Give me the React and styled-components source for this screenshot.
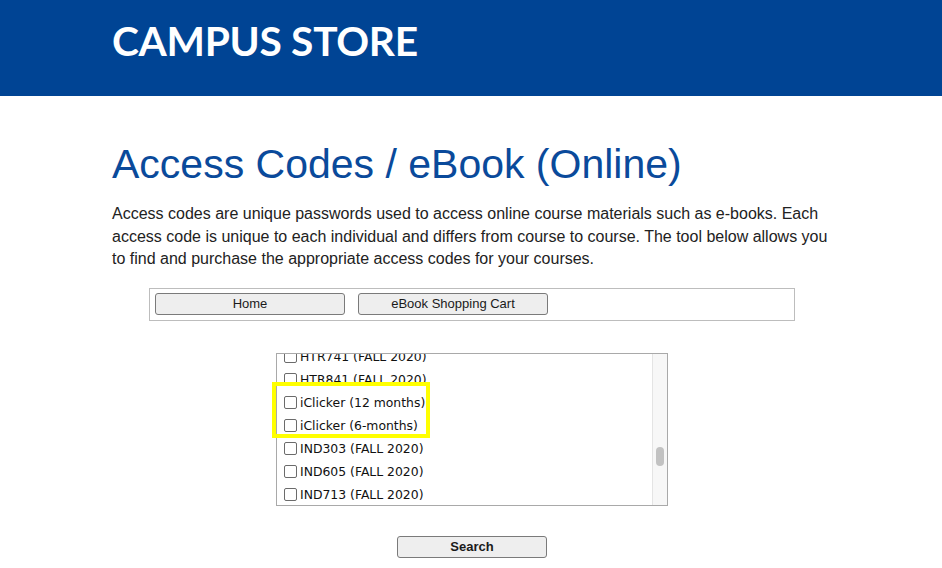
import React from "react";
import styled, { createGlobalStyle } from "styled-components";

const GlobalStyle = createGlobalStyle`
    body {
        margin : 0;
        background : #ffffff;
        font-family : "Liberation Sans", Arial, sans-serif;
    }
    * {
        box-sizing : border-box;
    }
`

const Header = styled.header`
    background : #004494;
    height : 96px;
`

const HeaderInner = styled.div`
    width : 718px;
    margin : 0 auto;
    padding-top : 17px;
`

const Brand = styled.h1`
    margin : 0;
    font-family : Lato, "Noto Sans", sans-serif;
    font-weight : 700;
    font-size : 40.7px;
    line-height : 48px;
    color : #ffffff;
    letter-spacing : -0.3px;
`

const Main = styled.main`
    width : 718px;
    margin : 0 auto;
    padding-top : 44px;
`

const Title = styled.h2`
    margin : 0;
    font-weight : 400;
    font-size : 41px;
    line-height : 48px;
    color : #0a4a9b;
`

const Intro = styled.p`
    margin : 15px 0 0;
    font-size : 16px;
    line-height : 22.5px;
    color : #222222;
`

const Tool = styled.section`
    padding-left : 2px;
`

const NavBox = styled.nav`
    width : 646px;
    margin : 17px auto 0;
    border : 1px solid #bdbdbd;
    padding : 4px 5px 5px;
    display : flex;
    gap : 13px;
`

const Button = styled.button`
    width : ${props => props.$width || 190}px;
    height : 22px;
    padding : 0;
    background : #eeeeee;
    border : 1px solid #7a7a7a;
    border-radius : 3px;
    font-family : "Liberation Sans", Arial, sans-serif;
    font-size : 13px;
    font-weight : ${props => props.$bold ? 700 : 400};
    color : #1a1a1a;
`

const ListBox = styled.div`
    position : relative;
    width : 392px;
    height : 153px;
    margin : 32px auto 0;
    border : 1px solid #a9a9a9;
    display : flex;
`

const Items = styled.div`
    flex : 1;
    overflow : hidden;
`

const ItemsInner = styled.div`
    margin-top : -9px;
    padding-left : 6px;
`

const Row = styled.label`
    display : flex;
    align-items : center;
    height : 23px;
    font-family : "DejaVu Sans", Verdana, sans-serif;
    font-size : 12.4px;
    color : #111111;
`

const Check = styled.input.attrs({type : "checkbox"})`
    appearance : none;
    width : 13px;
    height : 13px;
    margin : 0 3px 0 1px;
    border : 1px solid #6b6b6b;
    border-radius : 2px;
    background : #ffffff;
`

const Track = styled.div`
    width : 15px;
    background : #f7f7f7;
    border-left : 1px solid #e4e4e4;
    position : relative;
`

const Thumb = styled.div`
    position : absolute;
    left : 3px;
    top : ${props => props.$top}px;
    width : 8px;
    height : 19px;
    border-radius : 4px;
    background : #c2c2c2;
`

const Highlight = styled.div`
    position : absolute;
    left : -5px;
    top : 28px;
    width : 158px;
    height : 56px;
    border : 4px solid #ffff00;
    pointer-events : none;
`

const SearchRow = styled.div`
    display : flex;
    justify-content : center;
    margin-top : 30px;
`

const courses = [
    "HTR741 (FALL 2020)",
    "HTR841 (FALL 2020)",
    "iClicker (12 months)",
    "iClicker (6-months)",
    "IND303 (FALL 2020)",
    "IND605 (FALL 2020)",
    "IND713 (FALL 2020)",
]

const App = () => {
    return(
        <>
        <GlobalStyle />
        <Header>
            <HeaderInner>
                <Brand>CAMPUS STORE</Brand>
            </HeaderInner>
        </Header>
        <Main>
            <Title>Access Codes / eBook (Online)</Title>
            <Intro>
                Access codes are unique passwords used to access online course materials such as e-books. Each
                access code is unique to each individual and differs from course to course. The tool below allows you
                to find and purchase the appropriate access codes for your courses.
            </Intro>
        </Main>
        <Tool>
            <NavBox>
                <Button>Home</Button>
                <Button>eBook Shopping Cart</Button>
            </NavBox>
            <ListBox>
                <Items>
                    <ItemsInner>
                        {courses.map(c => (
                            <Row key={c}>
                                <Check />
                                {c}
                            </Row>
                        ))}
                    </ItemsInner>
                </Items>
                <Track>
                    <Thumb $top={93} />
                </Track>
                <Highlight />
            </ListBox>
            <SearchRow>
                <Button $width={150} $bold>Search</Button>
            </SearchRow>
        </Tool>
        </>
    )
}

export default App;
